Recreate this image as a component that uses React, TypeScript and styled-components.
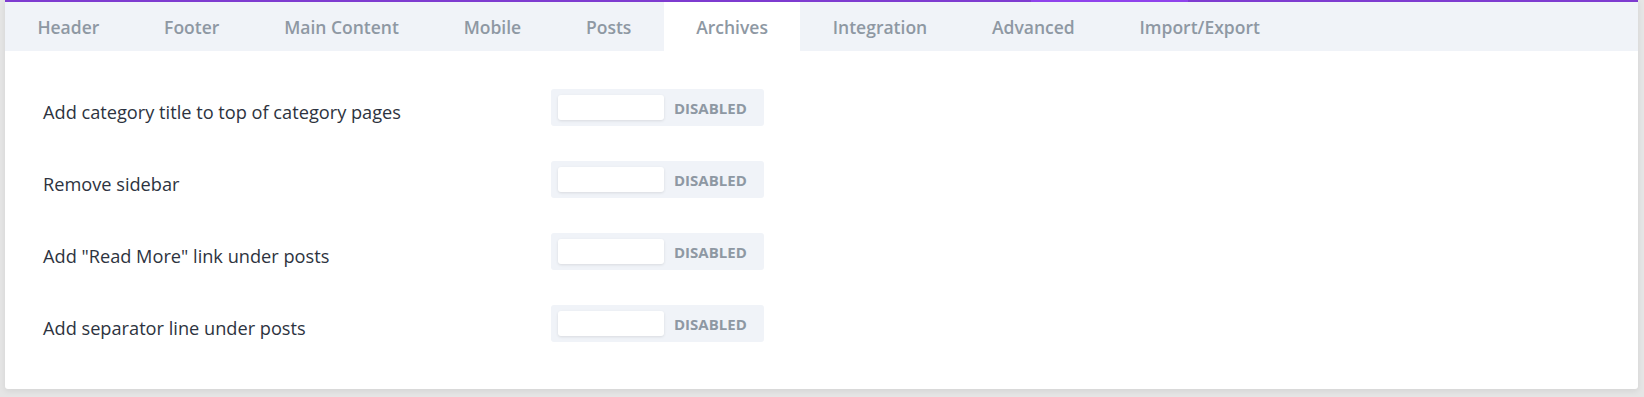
import styled, { createGlobalStyle } from 'styled-components'

const GlobalStyle = createGlobalStyle`
  html,
  body {
    margin: 0;
    padding: 0;
    background: #e5e5e5;
    font-family: 'Open Sans', 'Noto Sans', sans-serif;
  }
`

const tabs = ['Header', 'Footer', 'Main Content', 'Mobile', 'Posts', 'Archives', 'Integration', 'Advanced', 'Import/Export']

const options = [
  'Add category title to top of category pages',
  'Remove sidebar',
  'Add "Read More" link under posts',
  'Add separator line under posts',
]

const WPage = styled.div`
  height: 397px;
  padding: 0 6px 0 5px;
  box-sizing: border-box;
`
const WCard = styled.div`
  height: 389px;
  background: #fff;
  border-radius: 0 0 3px 3px;
  box-shadow: 0 2px 6px rgba(0, 0, 0, 0.08);
  overflow: hidden;
`
const WTopLine = styled.div`
  height: 2px;
  background: linear-gradient(
    to right,
    #7e3bd0 1026px,
    #8f42ec 1026px,
    #8f42ec 1183px,
    #7e3bd0 1183px
  );
`
const WTabBar = styled.div`
  display: flex;
  height: 49px;
  background: #f0f3f8;
`
const WTab = styled.div<{ $active?: boolean }>`
  display: flex;
  align-items: center;
  padding: 0 32.4px;
  font-size: 17.5px;
  font-weight: 600;
  color: #8e98a3;
  background: ${({ $active }) => ($active ? '#fff' : 'transparent')};
  white-space: nowrap;
`
const WContent = styled.div`
  display: flex;
  flex-direction: column;
  gap: 35px;
  padding: 38px 36px 38px 38px;
`
const WRow = styled.div`
  display: grid;
  grid-template-columns: 508px auto;
  align-items: center;
`
const WLabel = styled.div`
  padding-top: 9px;
  font-size: 18.2px;
  font-weight: 500;
  color: #2d3340;
`
const WToggle = styled.div`
  display: flex;
  align-items: center;
  width: 213px;
  height: 37px;
  padding: 6px 7px;
  box-sizing: border-box;
  background: #f0f3f8;
  border-radius: 3px;
`
const WKnob = styled.div`
  width: 106px;
  height: 25px;
  background: #fff;
  border-radius: 3px;
  box-shadow: 0 1px 3px rgba(0, 0, 0, 0.1);
`
const WState = styled.span`
  margin-left: 10px;
  font-size: 15px;
  font-weight: 700;
  color: #8e98a3;
  text-transform: uppercase;
`

const App = () => {
  return (
    <>
      <GlobalStyle />
      <WPage>
        <WCard>
          <WTopLine />
          <WTabBar>
            {tabs.map((t) => (
              <WTab key={t} $active={t === 'Archives'}>
                {t}
              </WTab>
            ))}
          </WTabBar>
          <WContent>
            {options.map((o) => (
              <WRow key={o}>
                <WLabel>{o}</WLabel>
                <WToggle>
                  <WKnob />
                  <WState>Disabled</WState>
                </WToggle>
              </WRow>
            ))}
          </WContent>
        </WCard>
      </WPage>
    </>
  )
}

export default App
